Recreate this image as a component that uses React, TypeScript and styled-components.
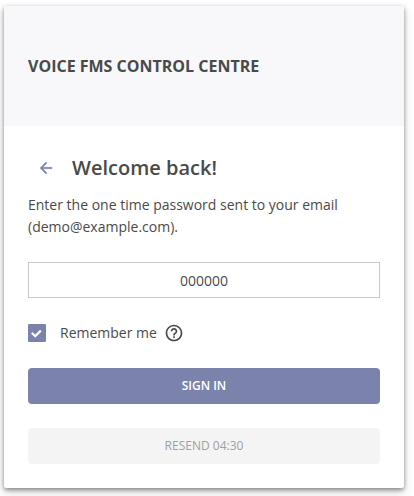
import React, { useState } from "react";
import styled, { createGlobalStyle } from "styled-components";

const GlobalStyle = createGlobalStyle`
  *, *::before, *::after { box-sizing: border-box; }
  body {
    margin: 0;
    background: #fff;
    color: #4a4a4a;
    font: 14px/22px "Open Sans", "Noto Sans", sans-serif;
  }
`;

const Card = styled.main`
  margin: 6px 10px 8px 4px;
  overflow: hidden;
  border-radius: 2px;
  background: #fff;
  box-shadow: 0 2px 4px rgba(0, 0, 0, 0.4), 0 4px 12px rgba(0, 0, 0, 0.16);
`;

const Header = styled.header`
  display: flex;
  align-items: center;
  height: 120px;
  padding: 0 24px;
  background: #f8f8fb;
`;

const Brand = styled.h1`
  margin: 0;
  font-size: 16px;
  line-height: 24px;
  font-weight: 700;
`;

const Form = styled.form`
  display: flex;
  flex-direction: column;
  padding: 24px;
`;

const TitleRow = styled.div`
  display: flex;
  align-items: center;
  gap: 8px;
  height: 36px;
`;

const BackButton = styled.button`
  display: grid;
  place-items: center;
  width: 36px;
  height: 36px;
  padding: 0;
  border: 0;
  background: transparent;
  color: #7b83ad;
  cursor: pointer;
`;

const Title = styled.h2`
  margin: 0;
  font-size: 20px;
  line-height: 28px;
  font-weight: 600;
`;

const Message = styled.p`
  margin: 8px 0 24px;
`;

const CodeInput = styled.input`
  width: 100%;
  height: 36px;
  padding: 0 12px;
  border: 1px solid #c8c8c8;
  border-radius: 0;
  background: #fff;
  color: inherit;
  font: inherit;
  text-align: center;
`;

const RememberRow = styled.div`
  display: flex;
  align-items: center;
  gap: 7px;
  height: 22px;
  margin: 24px 0;
`;

const RememberLabel = styled.label`
  display: flex;
  align-items: center;
  gap: 14px;
  cursor: pointer;
`;

const CheckFrame = styled.span`
  display: grid;
  width: 18px;
  height: 18px;

  > * { grid-area: 1 / 1; }
  > svg { pointer-events: none; }
`;

const Checkbox = styled.input`
  appearance: none;
  width: 18px;
  height: 18px;
  margin: 0;
  border: 1px solid #7b83ad;
  border-radius: 1px;
  background: #fff;

  &:checked { background: #7b83ad; }
`;

const HelpButton = styled.button`
  display: grid;
  place-items: center;
  width: 20px;
  height: 20px;
  padding: 0;
  border: 0;
  background: transparent;
  color: inherit;
`;

const ActionButton = styled.button<{ $primary?: boolean }>`
  height: 36px;
  border: 0;
  border-radius: 4px;
  background: ${(p) => (p.$primary ? "#7b83ad" : "#f4f4f4")};
  color: ${(p) => (p.$primary ? "#fff" : "#a0a0a0")};
  font: inherit;
  font-size: 12px;
  font-weight: ${(p) => (p.$primary ? 600 : 400)};

  & + & { margin-top: 24px; }
`;

export default function App() {
  const [code, setCode] = useState("000000");
  const [remember, setRemember] = useState(true);

  return (
    <>
      <GlobalStyle />
      <Card>
        <Header>
          <Brand>VOICE FMS CONTROL CENTRE</Brand>
        </Header>
        <Form onSubmit={(e) => e.preventDefault()}>
          <TitleRow>
            <BackButton type="button" aria-label="Back">
              <svg width="18" height="18" viewBox="0 0 24 24" fill="currentColor" stroke="currentColor" strokeWidth="0.5">
                <path d="M20 11H7.8l5.6-5.6L12 4l-8 8 8 8 1.4-1.4L7.8 13H20z" />
              </svg>
            </BackButton>
            <Title>Welcome back!</Title>
          </TitleRow>
          <Message>
            Enter the one time password sent to your email (demo@example.com).
          </Message>
          <CodeInput
            aria-label="One time password"
            inputMode="numeric"
            value={code}
            onChange={(e) => setCode(e.target.value)}
          />
          <RememberRow>
            <RememberLabel>
              <CheckFrame>
                <Checkbox
                  type="checkbox"
                  checked={remember}
                  onChange={(e) => setRemember(e.target.checked)}
                />
                {remember && (
                  <svg width="18" height="18" viewBox="0 0 18 18" fill="none" stroke="#fff" strokeWidth="2.2">
                    <path d="M3.8 8.8l3.4 3.4 5.6-5.6" />
                  </svg>
                )}
              </CheckFrame>
              Remember me
            </RememberLabel>
            <HelpButton type="button" aria-label="About remember me">
              <svg width="20" height="20" viewBox="0 0 24 24" fill="currentColor">
                <path d="M11 18h2v-2h-2v2zm1-16C6.48 2 2 6.48 2 12s4.48 10 10 10 10-4.48 10-10S17.52 2 12 2zm0 18c-4.41 0-8-3.59-8-8s3.59-8 8-8 8 3.59 8 8-3.59 8-8 8zm0-14c-2.21 0-4 1.79-4 4h2c0-1.1.9-2 2-2s2 .9 2 2c0 2-3 1.75-3 5h2c0-2.25 3-2.5 3-5 0-2.21-1.79-4-4-4z" />
              </svg>
            </HelpButton>
          </RememberRow>
          <ActionButton type="submit" $primary>SIGN IN</ActionButton>
          <ActionButton type="button" disabled>RESEND 04:30</ActionButton>
        </Form>
      </Card>
    </>
  );
}
